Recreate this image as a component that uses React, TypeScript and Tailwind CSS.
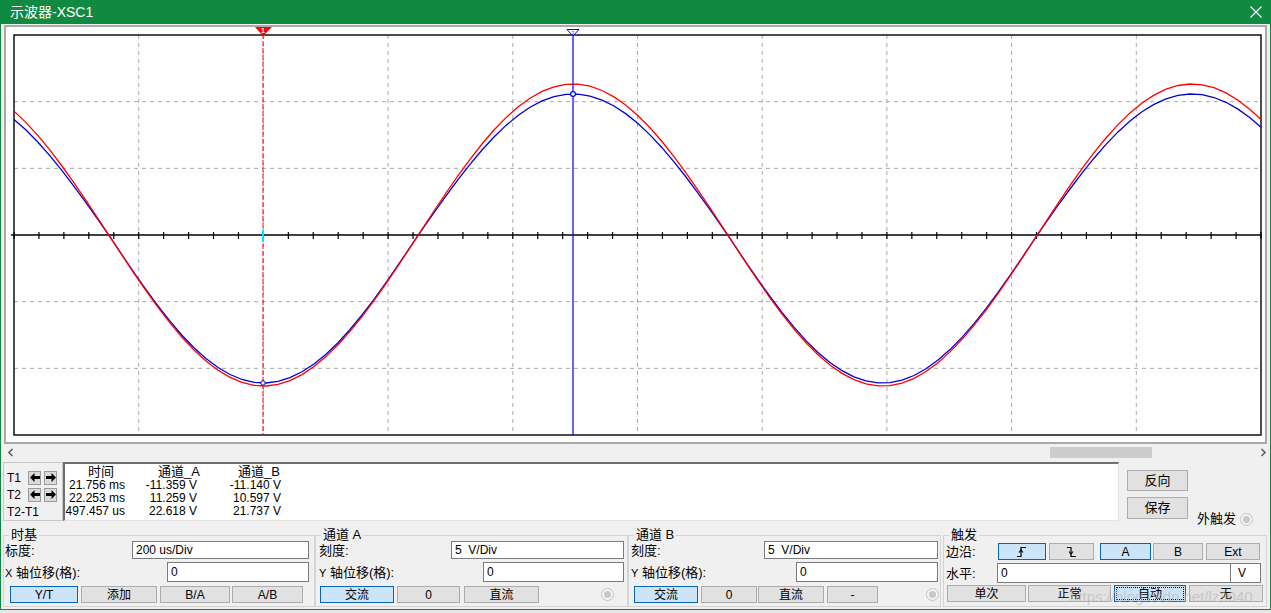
import React from "react"

const font = "font-['Liberation_Sans','Noto_Sans_CJK_SC',sans-serif]"

// scope geometry, in page pixels
const L = 13
const R = 1260
const T = 35
const B = 435
const CY = 235
const DX = (R - L) / 10
const DY = (B - T) / 6
const P = 619

const redY = (x: number) => CY - 151 * Math.cos((2 * Math.PI * (x - 572)) / P)
const blueY = (x: number) => {
    const c = Math.cos((2 * Math.PI * (x - 572)) / P)
    return c > 0 ? CY - 141 * c : CY - 148 * c
}

function points(f: (x: number) => number) {
    const out: string[] = []
    for (let x = L; x <= R; x += 12) out.push(`${x},${f(x).toFixed(1)}`)
    out.push(`${R},${f(R).toFixed(1)}`)
    return out.join(" ")
}

function Scope() {
    const vx = Array.from({ length: 9 }, (_, i) => L + DX * (i + 1))
    const hy = [1, 2, 4, 5].map((j) => T + DY * j)
    const ticks: number[] = []
    for (let x = L; x <= R + 0.5; x += DX / 5) ticks.push(x)

    return (
        <div className="mx-[3px] mt-px h-[419px] border-2 border-[#a9a9a9] bg-white">
            <svg width={1261} height={415} viewBox="5 27 1261 415" className="block">
                {vx.map((x) => (
                    <line key={x} x1={x} x2={x} y1={T} y2={B} stroke="#a8a8a8" strokeDasharray="4 4" />
                ))}
                {hy.map((y) => (
                    <line key={y} x1={L} x2={R} y1={y} y2={y} stroke="#a8a8a8" strokeDasharray="4 4" />
                ))}
                <rect x={L} y={T} width={R - L} height={B - T} fill="none" stroke="#000" strokeWidth={1.4} />
                <line x1={10} x2={R} y1={CY} y2={CY} stroke="#000" strokeWidth={1.4} />
                {ticks.map((x) => (
                    <line key={x} x1={x} x2={x} y1={CY - 3} y2={CY + 4} stroke="#000" strokeWidth={1.2} />
                ))}

                <polyline points={points(blueY)} fill="none" stroke="#0000d0" strokeWidth={1.3} />
                <polyline points={points(redY)} fill="none" stroke="#ff0000" strokeWidth={1.3} />

                {/* cursor 1 */}
                <line x1={262} x2={262} y1={27} y2={B} stroke="#ff0000" strokeWidth={1} strokeDasharray="5 2" />
                <line x1={262} x2={262} y1={230} y2={241} stroke="#00e5ff" strokeWidth={2} />
                <polygon points="254,27 271,27 262,36" fill="#ff0000" />
                <text x={262} y={33} fontSize={7} fill="#fff" textAnchor="middle" fontFamily="Liberation Sans" fontWeight="bold">1</text>
                <circle cx={262} cy={383} r={2.2} fill="#fff" stroke="#0000d0" strokeWidth={1} />

                {/* cursor 2 */}
                <line x1={572} x2={572} y1={31} y2={B} stroke="#0000ff" strokeWidth={1.2} />
                <polygon points="566,29.5 578,29.5 572,36" fill="#fff" stroke="#0000ff" strokeWidth={1} />
                <text x={572} y={34.5} fontSize={5} fill="#0000ff" textAnchor="middle" fontFamily="Liberation Sans">2</text>
                <circle cx={572} cy={94} r={2.4} fill="#fff" stroke="#0000d0" strokeWidth={1.2} />
            </svg>
        </div>
    )
}

function Arrow({ dir }: { dir: "l" | "r" }) {
    return (
        <span className="flex h-[14px] w-[13px] items-center justify-center border border-[#9a9a9a] bg-[#dadada]">
            <svg width="10" height="9" viewBox="0 0 10 9">
                {dir === "l" ? (
                    <path d="M0 4.5 L4.5 0 V3 H10 V6 H4.5 V9 Z" fill="#000" />
                ) : (
                    <path d="M10 4.5 L5.5 0 V3 H0 V6 H5.5 V9 Z" fill="#000" />
                )}
            </svg>
        </span>
    )
}

function Btn({ w, on, children, className = "" }: { w: string; on?: boolean; children: React.ReactNode; className?: string }) {
    return (
        <div
            className={`flex h-[17px] shrink-0 items-center justify-center border text-[12px] leading-none text-black ${w} ${
                on ? "border-[#0a64b0] bg-[#cce4f7]" : "border-[#adadad] bg-[#e1e1e1]"
            } ${className}`}
        >
            {children}
        </div>
    )
}

function Field({ w, h = "h-[18px]", children, className = "" }: { w: string; h?: string; children?: React.ReactNode; className?: string }) {
    return (
        <div className={`flex shrink-0 items-center border border-[#7a7a7a] bg-white pl-[3px] text-[12px] text-black ${w} ${h} ${className}`}>
            {children}
        </div>
    )
}

function Radio() {
    return (
        <span className="flex h-[13px] w-[13px] shrink-0 items-center justify-center rounded-full border border-[#c4c4c4] bg-[#f4f4f4]">
            <span className="h-[7px] w-[7px] rounded-full bg-[#c8c8c8]" />
        </span>
    )
}

function Group({ title, className, children }: { title: string; className: string; children: React.ReactNode }) {
    return (
        <fieldset className={`h-[79px] shrink-0 border border-[#d4d4d4] px-0 ${className}`}>
            <legend className="ml-[5px] px-[2px] text-[13px] leading-[14px]">{title}</legend>
            {children}
        </fieldset>
    )
}

function EdgeIcon({ rising }: { rising: boolean }) {
    return (
        <svg width="12" height="12" viewBox="0 0 12 12">
            {rising ? (
                <>
                    <path d="M1 10.5 H5 V1.5 H10" fill="none" stroke="#000" strokeWidth="1.2" />
                    <path d="M3 6.5 L5 4 L7 6.5" fill="none" stroke="#000" strokeWidth="1.1" />
                </>
            ) : (
                <>
                    <path d="M1 1.5 H5 V10.5 H10" fill="none" stroke="#000" strokeWidth="1.2" />
                    <path d="M3 5.5 L5 8 L7 5.5" fill="none" stroke="#000" strokeWidth="1.1" />
                </>
            )}
        </svg>
    )
}

export default function App() {
    return (
        <div className={`relative h-[613px] w-[1271px] overflow-hidden bg-[#e6e6e6] ${font}`}>
            <div className="flex h-[610px] flex-col border-x border-b border-[#118a41] bg-[#f0f0f0]">
                {/* Title bar */}
                <div className="-mx-px flex h-[24px] shrink-0 items-center justify-between bg-[#118a41] pl-[10px] pr-[9px] text-white">
                    <span className="text-[14px] leading-none">示波器-XSC1</span>
                    <svg width="12" height="12" viewBox="0 0 12 12">
                        <path d="M0.5 0.5 L11.5 11.5 M11.5 0.5 L0.5 11.5" stroke="#fff" strokeWidth="1.2" />
                    </svg>
                </div>

                <Scope />

                {/* Scroll bar */}
                <div className="flex h-[16px] shrink-0 items-center">
                    <div className="flex w-[18px] justify-center">
                        <svg width="7" height="9" viewBox="0 0 7 9">
                            <path d="M5.5 1 L2 4.5 L5.5 8" fill="none" stroke="#606060" strokeWidth="1.6" />
                        </svg>
                    </div>
                    <div className="flex flex-1 items-center">
                        <div className="ml-[1031px] h-[11px] w-[102px] bg-[#cdcdcd]" />
                    </div>
                    <div className="flex w-[14px] justify-center">
                        <svg width="7" height="9" viewBox="0 0 7 9">
                            <path d="M1.5 1 L5 4.5 L1.5 8" fill="none" stroke="#606060" strokeWidth="1.6" />
                        </svg>
                    </div>
                </div>

                {/* Readout */}
                <div className="mt-[2px] flex h-[59px] shrink-0">
                    <div className="ml-[2px] flex w-[60px] flex-col border border-[#c8c8c8] pl-[3px] pt-[7px] text-[12px] leading-none text-black">
                        <div className="flex h-[15px] items-center">
                            <span className="w-[21px]">T1</span>
                            <Arrow dir="l" />
                            <span className="w-[3px]" />
                            <Arrow dir="r" />
                        </div>
                        <div className="mt-[2px] flex h-[15px] items-center">
                            <span className="w-[21px]">T2</span>
                            <Arrow dir="l" />
                            <span className="w-[3px]" />
                            <Arrow dir="r" />
                        </div>
                        <div className="mt-[4px]">T2-T1</div>
                    </div>
                    <div className="flex w-[1056px] border-l-2 border-t-2 border-b border-r border-l-[#6e6e6e] border-t-[#6e6e6e] border-b-[#e3e3e3] border-r-[#e3e3e3] bg-white pt-[1px] text-[12px] leading-[13px] text-black">
                        <div className="flex w-[60px] flex-col items-end">
                            <span className="mr-[11px] text-[13px] leading-[14px]">时间</span>
                            <span>21.756 ms</span>
                            <span>22.253 ms</span>
                            <span>497.457 us</span>
                        </div>
                        <div className="flex w-[72px] flex-col items-end">
                            <span className="-mr-[3px] text-[13px] leading-[14px]">通道_A</span>
                            <span>-11.359 V</span>
                            <span>11.259 V</span>
                            <span>22.618 V</span>
                        </div>
                        <div className="flex w-[84px] flex-col items-end">
                            <span className="mr-px text-[13px] leading-[14px]">通道_B</span>
                            <span>-11.140 V</span>
                            <span>10.597 V</span>
                            <span>21.737 V</span>
                        </div>
                    </div>
                    <div className="ml-[8px] flex flex-col pt-[8px]">
                        <div className="flex h-[21px] w-[61px] items-center justify-center border border-[#adadad] bg-[#e1e1e1] text-[13px]">反向</div>
                        <div className="mt-[6px] flex items-end">
                            <div className="flex h-[22px] w-[61px] items-center justify-center border border-[#adadad] bg-[#e1e1e1] text-[13px]">保存</div>
                            <span className="ml-[9px] translate-y-[6px] text-[13px] leading-none">外触发</span>
                            <span className="ml-[4px] translate-y-[7px]">
                                <Radio />
                            </span>
                        </div>
                    </div>
                </div>

                {/* Control groups */}
                <div className="mt-[7px] flex text-[13px] leading-none text-black">
                    <Group title="时基" className="ml-[2px] w-[312px]">
                        <div className="mt-[-1px] flex h-[18px] items-center pl-[1px]">
                            <span>标度:</span>
                            <Field w="ml-auto mr-[5px] w-[177px]">200 us/Div</Field>
                        </div>
                        <div className="mt-[3px] flex h-[20px] items-center pl-[1px]">
                            <span><span className="text-[11px]">X</span> 轴位移(格):</span>
                            <Field w="ml-auto mr-[5px] w-[142px]" h="h-[20px]">0</Field>
                        </div>
                        <div className="mt-[4px] flex pl-[6px]">
                            <Btn w="w-[68px]" on>Y/T</Btn>
                            <Btn w="ml-[3px] w-[76px]">添加</Btn>
                            <Btn w="ml-[3px] w-[70px]">B/A</Btn>
                            <Btn w="ml-[2px] w-[71px]">A/B</Btn>
                        </div>
                    </Group>

                    <Group title="通道 A" className="w-[313px]">
                        <div className="mt-[-1px] flex h-[18px] items-center pl-[3px]">
                            <span>刻度:</span>
                            <Field w="ml-auto mr-[3px] w-[173px]">5&nbsp;&nbsp;V/Div</Field>
                        </div>
                        <div className="mt-[3px] flex h-[20px] items-center pl-[3px]">
                            <span><span className="text-[11px]">Y</span> 轴位移(格):</span>
                            <Field w="ml-auto mr-[3px] w-[141px]" h="h-[20px]">0</Field>
                        </div>
                        <div className="mt-[4px] flex items-center pl-[4px]">
                            <Btn w="w-[74px]" on>交流</Btn>
                            <Btn w="ml-[3px] w-[63px]">0</Btn>
                            <Btn w="ml-[4px] w-[75px]">直流</Btn>
                            <span className="ml-[62px]">
                                <Radio />
                            </span>
                        </div>
                    </Group>

                    <Group title="通道 B" className="w-[313px]">
                        <div className="mt-[-1px] flex h-[18px] items-center pl-[2px]">
                            <span>刻度:</span>
                            <Field w="ml-auto mr-[2px] w-[174px]">5&nbsp;&nbsp;V/Div</Field>
                        </div>
                        <div className="mt-[3px] flex h-[20px] items-center pl-[2px]">
                            <span><span className="text-[11px]">Y</span> 轴位移(格):</span>
                            <Field w="ml-auto mr-[2px] w-[142px]" h="h-[20px]">0</Field>
                        </div>
                        <div className="mt-[4px] flex items-center pl-[5px]">
                            <Btn w="w-[64px]" on>交流</Btn>
                            <Btn w="ml-[3px] w-[56px]">0</Btn>
                            <Btn w="ml-px w-[66px]">直流</Btn>
                            <Btn w="ml-[3px] w-[51px]">-</Btn>
                            <span className="ml-[48px]">
                                <Radio />
                            </span>
                        </div>
                    </Group>

                    <Group title="触发" className="ml-[2px] w-[324px]">
                        <div className="mt-[1px] flex h-[17px] items-center pl-[2px]">
                            <span className="w-[52px]">边沿:</span>
                            <Btn w="w-[48px]" on><EdgeIcon rising /></Btn>
                            <Btn w="ml-[3px] w-[45px]"><EdgeIcon rising={false} /></Btn>
                            <Btn w="ml-[6px] w-[51px]" on>A</Btn>
                            <Btn w="ml-[2px] w-[50px]">B</Btn>
                            <Btn w="ml-[3px] w-[54px]">Ext</Btn>
                        </div>
                        <div className="mt-[3px] flex h-[20px] items-center pl-[2px]">
                            <span className="w-[51px]">水平:</span>
                            <Field w="w-[234px]" h="h-[20px]">0</Field>
                            <Field w="w-[30px] border-l-0 pl-[7px]" h="h-[20px]">V</Field>
                        </div>
                        <div className="mt-[2px] flex pl-[3px]">
                            <Btn w="w-[79px]">单次</Btn>
                            <Btn w="ml-[2px] w-[83px]">正常</Btn>
                            <Btn w="ml-[3px] w-[72px]" on>
                                <span className="flex h-[13px] w-[68px] items-center justify-center border border-dotted border-black">自动</span>
                            </Btn>
                            <Btn w="ml-[3px] w-[74px]">无</Btn>
                        </div>
                    </Group>
                </div>
            </div>

            <div className="pointer-events-none absolute left-[1070px] top-[589px] whitespace-nowrap text-[15px] leading-none text-[#b4b4b4]/60">
                https://blog.csdn.net/lz3040
            </div>
        </div>
    )
}
